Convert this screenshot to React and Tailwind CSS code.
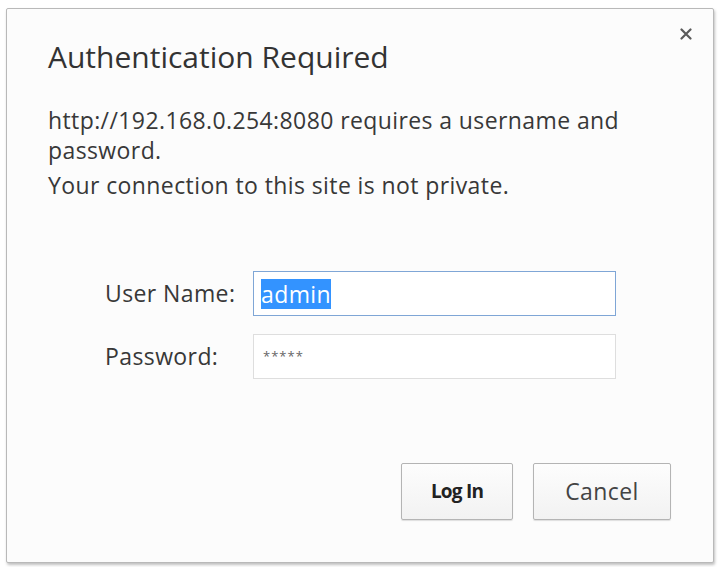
import React from 'react';

const App = () => {
  return (
    <div className="w-[721px] h-[567px] bg-white pl-[6px] pt-[8px] font-['Open_Sans',sans-serif] text-[#333]">
      {/* dialog */}
      <div className="relative w-[708px] h-[555px] bg-[#fcfcfc] border border-[#b9b9b9] rounded-[2px] shadow-[1px_2px_3px_rgba(0,0,0,0.25)] flex flex-col pl-[41px] pr-[30px] pt-[30px]">
        <button className="absolute right-[21px] top-[19px] text-[#555]">
          <svg width="12" height="12" viewBox="0 0 12 12">
            <path d="M1.5 1.5 L10.5 10.5 M10.5 1.5 L1.5 10.5" stroke="#5a5a5a" strokeWidth="2.2" strokeLinecap="round" />
          </svg>
        </button>

        <h1 className="text-[30px] leading-[36px] text-[#333] font-normal">Authentication Required</h1>

        <p className="mt-[30px] text-[23px] leading-[30px] tracking-[0.4px] text-[#383838]">
          http://192.168.0.254:8080 requires a username and password.
        </p>
        <p className="mt-[5px] text-[23px] leading-[30px] tracking-[0.4px] text-[#383838]">Your connection to this site is not private.</p>

        <div className="mt-[71px] grid grid-cols-[148px_363px] gap-y-[18px] items-center pl-[57px]">
          <label className="text-[23px] tracking-[0.4px] text-[#383838]">User Name:</label>
          <div className="h-[45px] border border-[#7fa6d6] bg-white flex items-center px-[7px]">
            <span className="bg-[#3393ff] text-white text-[23px] leading-[30px] tracking-[0.4px]">admin</span>
          </div>
          <label className="text-[23px] tracking-[0.4px] text-[#383838]">Password:</label>
          <div className="h-[45px] border border-[#dedede] bg-white flex items-center px-[9px] text-[13px] text-[#666] tracking-[1px]">
            *****
          </div>
        </div>

        <div className="mt-auto mb-[42px] flex justify-end gap-[20px] pr-[12px]">
          <button className="w-[112px] h-[57px] border border-[#b4b4b4] rounded-[2px] bg-gradient-to-b from-[#fdfdfd] to-[#f2f2f2] shadow-[0_1px_1px_rgba(0,0,0,0.12)] text-[19px] font-bold tracking-[-0.8px] text-[#222]">
            Log In
          </button>
          <button className="w-[138px] h-[57px] border border-[#b4b4b4] rounded-[2px] bg-gradient-to-b from-[#fdfdfd] to-[#f2f2f2] shadow-[0_1px_1px_rgba(0,0,0,0.12)] text-[23px] tracking-[0.4px] text-[#444]">
            Cancel
          </button>
        </div>
      </div>
    </div>
  );
};

export default App;
